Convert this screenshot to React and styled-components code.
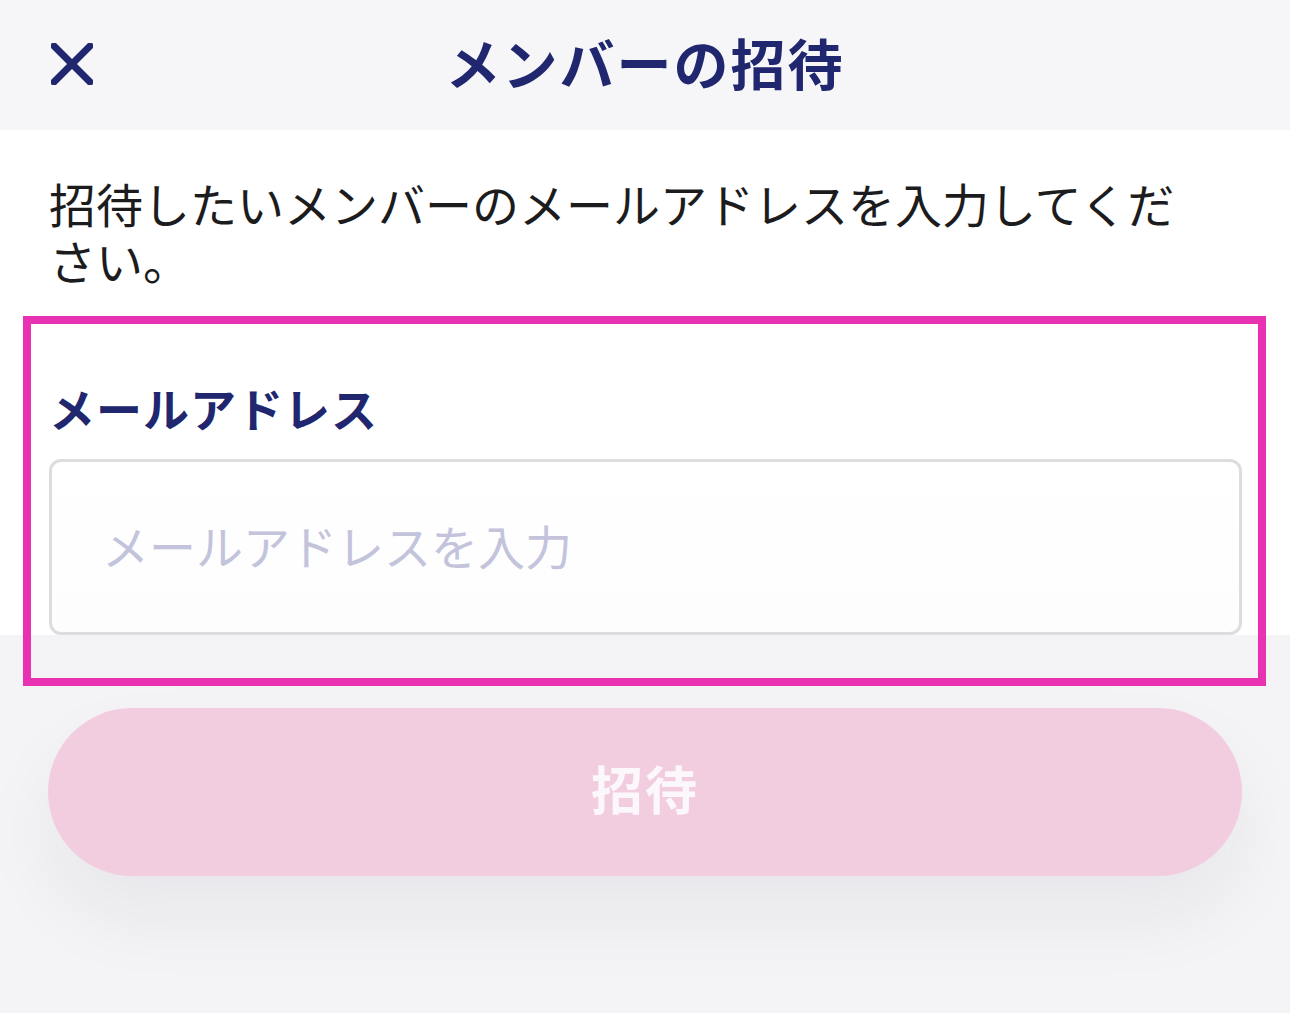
import React from "react";
import styled, { createGlobalStyle } from "styled-components";

const GlobalStyle = createGlobalStyle`
  html, body {
    margin: 0;
    padding: 0;
    background: #f4f4f6;
    font-family: "Noto Sans CJK JP", "Noto Sans", sans-serif;
  }
`;

const Page = styled.div`
  position: relative;
  width: 1290px;
  height: 1013px;
  overflow: hidden;
  background: #f4f4f6;
`;

const Header = styled.header`
  height: 130px;
  background: #f6f6f9;
  display: flex;
  align-items: center;
  justify-content: center;
  position: relative;
`;

const CloseButton = styled.button`
  position: absolute;
  left: 51px;
  top: 43px;
  width: 42px;
  height: 42px;
  padding: 0;
  border: none;
  background: none;
  cursor: pointer;
  display: flex;
`;

const Title = styled.h1`
  margin: 0 0 8px;
  font-size: 55px;
  font-weight: 700;
  color: #20276e;
  line-height: 1;
  letter-spacing: 2px;
`;

const Body = styled.section`
  background: #fff;
  padding: 44px 70px 0 49px;
`;

const Description = styled.p`
  margin: 0;
  font-size: 47px;
  line-height: 57px;
  color: #1c1c1e;
`;

const Label = styled.label`
  display: block;
  margin-top: 91px;
  font-size: 46px;
  line-height: 56px;
  font-weight: 700;
  color: #20276e;
  letter-spacing: 1px;
`;

const Input = styled.input`
  display: block;
  box-sizing: border-box;
  width: 1193px;
  height: 176px;
  margin-top: 24px;
  padding: 0 50px 6px;
  border: 3px solid #dcdddd;
  border-radius: 12px;
  background: linear-gradient(#ffffff, #fdfdfd);
  font-family: inherit;
  font-size: 47px;
  color: #1c1c1e;
  outline: none;

  &::placeholder {
    color: #c3c4dc;
  }
`;

const Footer = styled.div`
  padding: 73px 48px 0;
`;

const SubmitButton = styled.button`
  display: block;
  width: 1194px;
  height: 168px;
  padding: 0 0 10px;
  border: none;
  border-radius: 84px;
  background: #f2cde0;
  color: #fbf7fa;
  font-family: inherit;
  font-size: 52px;
  font-weight: 700;
  letter-spacing: 2px;
  box-shadow: 0 40px 80px rgba(40, 40, 70, 0.06);
  cursor: default;
`;

const Highlight = styled.div`
  position: absolute;
  left: 23px;
  top: 316px;
  width: 1243px;
  height: 370px;
  box-sizing: border-box;
  border: 8px solid #e932b2;
  pointer-events: none;
`;

function CloseIcon() {
  return (
    <svg width="42" height="42" viewBox="0 0 42 42">
      <path
        d="M3 3 L39 39 M39 3 L3 39"
        stroke="#20276e"
        strokeWidth="7"
        strokeLinecap="square"
      />
    </svg>
  );
}

export default function App() {
  return (
    <Page>
      <GlobalStyle />
      <Header>
        <CloseButton aria-label="閉じる">
          <CloseIcon />
        </CloseButton>
        <Title>メンバーの招待</Title>
      </Header>
      <Body>
        <Description>
          招待したいメンバーのメールアドレスを入力してください。
        </Description>
        <Label htmlFor="email">メールアドレス</Label>
        <Input id="email" type="email" placeholder="メールアドレスを入力" />
      </Body>
      <Footer>
        <SubmitButton disabled>招待</SubmitButton>
      </Footer>
      <Highlight />
    </Page>
  );
}
